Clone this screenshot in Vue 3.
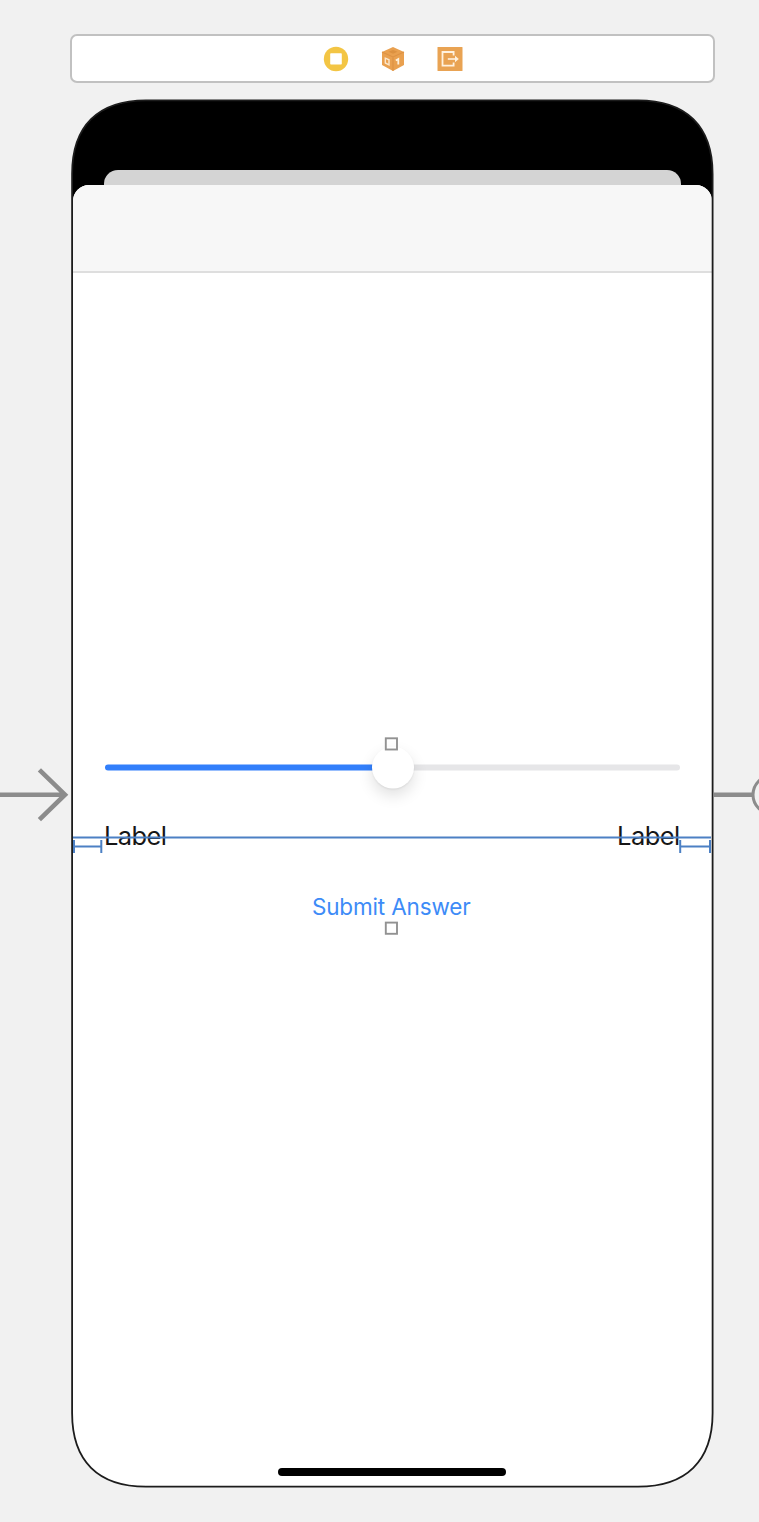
<script setup>
const handles = ['top', 'bottom']
</script>

<template>
  <main class="canvas">
    <header class="scene-dock">
      <svg class="dock-icon" viewBox="0 0 26 26">
        <circle cx="13" cy="13" r="12.2" fill="#f3c544" />
        <rect x="7.2" y="7.2" width="11.6" height="11.4" rx="0.8" fill="#fff" />
      </svg>
      <svg class="dock-icon" viewBox="0 0 26 26">
        <path d="M13 1 L24 6 V19 L13 25 L2 19 V6 Z" fill="#e9a04f" />
        <path d="M2 6 L13 11 L24 6 M13 11 V25" fill="none" stroke="#dd9244" stroke-width="1.1" />
        <path d="M8.5 5.8 L13 4 L17.5 5.8 L13 7.8 Z" fill="#dc9140" />
        <path d="M5.3 12.2 L9 13.8 V18.8 L5.3 17 Z" fill="none" stroke="#fbe6cb" stroke-width="1.4" />
        <path d="M15.8 14.5 L18.3 13 V18.5" fill="none" stroke="#fff1dc" stroke-width="1.8" />
      </svg>
      <svg class="dock-icon" viewBox="0 0 26 26">
        <rect x="0.5" y="1" width="25" height="24" rx="0.6" fill="#e9a353" />
        <path d="M16.6 9.5 V6 H5.5 V19.6 H16.6 V16.4" fill="none" stroke="#fff2df" stroke-width="1.8" />
        <path d="M10.8 13 H20" fill="none" stroke="#fff2df" stroke-width="1.6" />
        <path d="M18 9.8 L21.8 13 L18 16.2 Z" fill="#fff2df" />
      </svg>
    </header>

    <section class="phone">
      <div class="back-card"></div>
      <div class="sheet">
        <div class="nav-bar"></div>
        <div class="content">
          <div class="slider">
            <div class="track filled"></div>
            <div class="thumb"></div>
            <div class="track rest"></div>
          </div>
          <div class="labels">
            <span>Label</span>
            <span>Label</span>
          </div>
          <div class="submit">Submit Answer</div>
        </div>
        <div class="home-indicator"></div>
      </div>
    </section>

    <svg class="overlay" viewBox="0 0 759 1522">
      <path
        class="bezel"
        d="M72.1 174 C72.1 126 98 100.4 146 100.4 H638 C686 100.4 712.6 126 712.6 174 V1413 C712.6 1461 686 1486.6 638 1486.6 H146 C98 1486.6 72.1 1461 72.1 1413 Z"
      />
      <g class="connector">
        <path d="M0 794.7 H65 M39.4 769.8 L65 794.7 L39.4 819.6" />
        <path d="M714 794.7 H753" />
        <circle cx="772" cy="794.7" r="19" />
      </g>
      <g class="guides">
        <path d="M73 837.4 H711" />
        <path d="M74 846.5 H101 M74 840 V853 M101.3 840 V853" />
        <path d="M680 846.5 H710 M680.2 840 V853 M710 840 V853" />
      </g>
      <g class="handles">
        <rect
          v-for="name in handles"
          :key="name"
          x="385.8"
          :y="name === 'top' ? 738.3 : 922.6"
          width="11.2"
          height="11.2"
        />
      </g>
    </svg>
  </main>
</template>

<style>
body {
  background: #f1f1f1;
}
</style>

<style scoped>
.canvas {
  position: relative;
  box-sizing: border-box;
  width: 759px;
  height: 1522px;
  padding: 34px 0 0 70px;
  overflow: hidden;
  background: #f1f1f1;
  font-family: Inter, "Liberation Sans", sans-serif;
}
.scene-dock {
  box-sizing: border-box;
  width: 645px;
  height: 49px;
  border: 2px solid #c1c1c1;
  border-radius: 7px;
  background: #fff;
  display: flex;
  align-items: center;
  justify-content: center;
  gap: 31px;
  padding-left: 1px;
}
.dock-icon {
  width: 26px;
  height: 26px;
}
.phone {
  width: 641px;
  height: 1387px;
  margin: 17px 0 0 2px;
  background: #000;
  clip-path: path("M0 74 C0 26 26 .4 74 .4 H566 C614 .4 640.8 26 640.8 74 V1313 C640.8 1361 614 1386.6 566 1386.6 H74 C26 1386.6 0 1361 0 1313 Z");
  display: flex;
  flex-direction: column;
  padding-top: 70px;
  box-sizing: border-box;
}
.back-card {
  flex: none;
  height: 15px;
  margin: 0 32px;
  border-radius: 14px 14px 0 0;
  background: #d4d4d4;
}
.sheet {
  flex: 1;
  display: flex;
  flex-direction: column;
  align-items: center;
  margin: 0 1px;
  border-radius: 16px 16px 0 0;
  background: #fff;
  overflow: hidden;
}
.nav-bar {
  box-sizing: border-box;
  align-self: stretch;
  height: 88px;
  border-bottom: 2px solid #dedede;
  background: #f7f7f7;
}
.content {
  flex: 1;
  align-self: stretch;
  padding: 473px 32.5px 0 32px;
}
.slider {
  display: flex;
  align-items: center;
  height: 42px;
  transform: translateY(0.5px);
}
.track {
  height: 6px;
}
.filled {
  width: 268px;
  border-radius: 3px 0 0 3px;
  background: #327ffb;
}
.rest {
  flex: 1;
  border-radius: 0 3px 3px 0;
  background: #e6e6e8;
}
.thumb {
  width: 42px;
  height: 42px;
  margin: 0 -1px;
  border-radius: 50%;
  background: #fff;
  box-shadow: 0 7px 15px rgba(0, 0, 0, 0.12), 0 1px 2px rgba(0, 0, 0, 0.07);
  z-index: 1;
}
.labels {
  display: flex;
  justify-content: space-between;
  margin: 32px 0 0 -1px;
  font-size: 25.5px;
  line-height: 32px;
  letter-spacing: -0.6px;
  color: #161616;
}
.submit {
  margin: 41px 2px 0 0;
  text-align: center;
  font-size: 22.5px;
  line-height: 28px;
  letter-spacing: -0.15px;
  color: #3d8bf7;
}
.home-indicator {
  width: 228px;
  height: 8px;
  margin: 0 1px 11.5px 0;
  border-radius: 4px;
  background: #000;
}
.overlay {
  position: absolute;
  left: 0;
  top: 0;
  width: 759px;
  height: 1522px;
  fill: none;
}
.bezel {
  stroke: #1c1c1c;
  stroke-width: 1.8;
}
.connector {
  stroke: #8c8c8c;
  stroke-width: 4.6;
}
.connector circle {
  stroke-width: 3;
}
.guides {
  stroke: #4c80c4;
  stroke-width: 2;
}
.handles {
  stroke: #929292;
  stroke-width: 1.9;
}
</style>
